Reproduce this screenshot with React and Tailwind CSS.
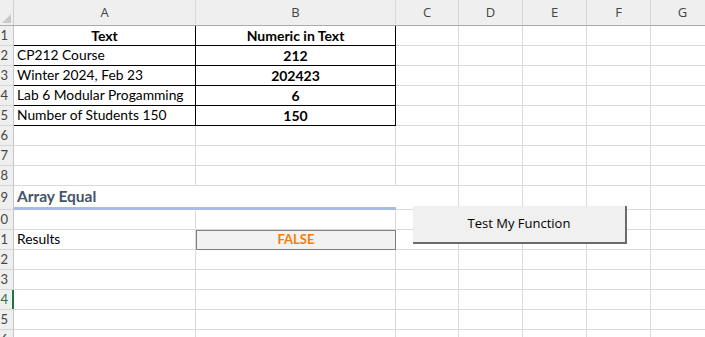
import React from 'react';

const cols = ['A', 'B', 'C', 'D', 'E', 'F', 'G'];
const colW = ['w-[182px]', 'w-[200px]', 'w-[63px]', 'w-[64px]', 'w-[64px]', 'w-[64px]', 'w-[64px]'];

const tableRows = [
  { a: 'CP212 Course', b: '212' },
  { a: 'Winter 2024, Feb 23', b: '202423' },
  { a: 'Lab 6 Modular Progamming', b: '6' },
  { a: 'Number of Students 150', b: '150' },
];

const cellFont = { fontFamily: 'Lato, "Liberation Sans", sans-serif' };

const RowHead = ({ n, active }) => (
  <div
    className={`w-[14px] shrink-0 h-full bg-[#efefef] border-b border-b-[#d6d6d6] flex items-center justify-end overflow-hidden relative ${
      active ? 'text-[#217346]' : 'text-[#444]'
    }`}
  >
    <span className="text-[13px] pr-[6px] leading-none">{n}</span>
    <div className={`absolute right-0 top-0 bottom-0 ${active ? 'w-[2px] bg-[#217346]' : 'w-px bg-[#c6c6c6]'}`} />
  </div>
);

const Blank = ({ i, extra = '' }) => (
  <div className={`${colW[i]} shrink-0 h-full border-r border-b border-[#dadada] ${extra}`} />
);

const Row = ({ n, h = 'h-[20px]', active, children }) => (
  <div className={`flex ${h}`} style={cellFont}>
    <RowHead n={n} active={active} />
    {children}
  </div>
);

const Rest = ({ from = 2 }) => (
  <>
    {cols.slice(from).map((c, i) => (
      <Blank key={c} i={i + from} />
    ))}
  </>
);

export default function App() {
  return (
    <div className="relative w-[705px] h-[337px] overflow-hidden bg-white text-black select-none">
      {/* column headers */}
      <div className="flex h-[26px] bg-[#efefef] border-b border-b-[#ababab]">
        <div className="w-[14px] shrink-0 relative border-r border-[#d0d0d0]">
          <svg className="absolute right-[2px] bottom-[2px]" width="9" height="9" viewBox="0 0 9 9">
            <polygon points="9,0 9,9 0,9" fill="#c9c9c9" />
          </svg>
        </div>
        {cols.map((c, i) => (
          <div
            key={c}
            className={`${colW[i]} shrink-0 flex items-center justify-center border-r border-[#d8d8d8] text-[13px] text-[#444]`}
            style={{ fontFamily: '"Open Sans", "Noto Sans", sans-serif' }}
          >
            {c}
          </div>
        ))}
      </div>

      {/* row 1 */}
      <Row n={1}>
        <div className="w-[182px] shrink-0 h-full border-r border-b border-black flex items-center justify-center font-bold text-[14px]">
          Text
        </div>
        <div className="w-[200px] shrink-0 h-full border-r border-b border-black flex items-center justify-center font-bold text-[14px]">
          Numeric in Text
        </div>
        <Rest />
      </Row>

      {tableRows.map((r, i) => (
        <Row key={i} n={i + 2}>
          <div className="w-[182px] shrink-0 h-full border-r border-b border-black flex items-center pl-[3px] text-[13.8px]">
            {r.a}
          </div>
          <div className="w-[200px] shrink-0 h-full border-r border-b border-black flex items-center justify-center font-bold text-[14px]">
            {r.b}
          </div>
          <Rest />
        </Row>
      ))}

      {[6, 7, 8].map((n) => (
        <Row key={n} n={n}>
          <Rest from={0} />
        </Row>
      ))}

      {/* row 9 heading */}
      <Row n={9} h="h-[24px]">
        <div className="w-[382px] shrink-0 h-full border-b-[3px] border-b-[#a9bce4] flex items-center pl-[3px] pt-px font-bold text-[15.5px] text-[#44546a]">
          Array Equal
        </div>
        <Rest />
      </Row>

      <Row n={10}>
        <Rest from={0} />
      </Row>

      <Row n={11}>
        <div className="w-[182px] shrink-0 h-full border-r border-b border-[#dadada] flex items-center pl-[3px] text-[13.8px]">
          Results
        </div>
        <div className="w-[200px] shrink-0 h-full border border-[#7f7f7f] bg-[#f2f2f2] flex items-center justify-center font-bold text-[13px] text-[#fa7d00]">
          FALSE
        </div>
        <Rest />
      </Row>

      {[12, 13, 14, 15, 16].map((n) => (
        <Row key={n} n={n} active={n === 14}>
          <Rest from={0} />
        </Row>
      ))}

      {/* form button */}
      <button
        className="absolute left-[413px] top-[206px] w-[214px] h-[38px] bg-[#f0f0f0] border-r-2 border-b-2 border-[#6b6b6b] text-[13px] text-black flex items-center justify-center"
        style={{ fontFamily: '"Open Sans", "Noto Sans", sans-serif' }}
      >
        Test My Function
      </button>
    </div>
  );
}
